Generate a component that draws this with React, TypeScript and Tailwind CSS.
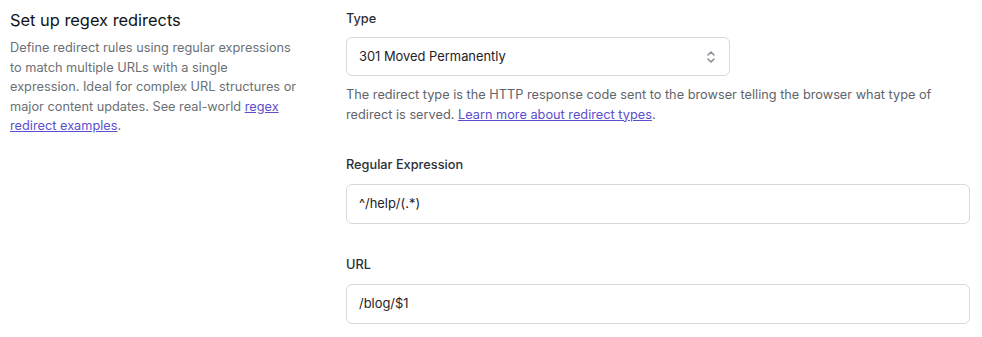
import React from "react";

export default function App() {
  return (
    <div className="w-[982px] h-[337px] bg-white flex" style={{ fontFamily: "Inter, 'Noto Sans', sans-serif" }}>
      <div className="w-[336px] pl-[10px] pt-[8px] pr-[30px]">
        <h2 className="text-[16.4px] leading-[24px] font-normal text-[#111316]">Set up regex redirects</h2>
        <p className="mt-[6px] text-[12.75px] leading-[19.6px] text-[#6b6f76]">
          Define redirect rules using regular expressions<br />
          to match multiple URLs with a single<br />
          expression. Ideal for complex URL structures or<br />
          major content updates. See real-world{" "}
          <a href="#" className="text-[#5a4fcf] underline">regex</a>
          <br />
          <a href="#" className="text-[#5a4fcf] underline">redirect examples</a>.
        </p>
      </div>
      <div className="flex-1 pl-[10px] pr-[12px] pt-[10px] flex flex-col">
        <label className="text-[12.75px] leading-[18px] font-medium text-[#2b2f36]">Type</label>
        <div className="mt-[9px] w-[384px] h-[39px] border border-[#d6d9de] rounded-[6px] flex items-center justify-between pl-[12px] pr-[12px]">
          <span className="text-[12.9px] text-[#1f2328]">301 Moved Permanently</span>
          <svg width="12" height="16" viewBox="0 0 12 16" fill="none" stroke="#8a9099" strokeWidth="1.6" strokeLinecap="round" strokeLinejoin="round">
            <path d="M3 6 L6 3 L9 6" />
            <path d="M3 10 L6 13 L9 10" />
          </svg>
        </div>
        <p className="mt-[9px] text-[12.75px] leading-[19.5px] text-[#5f646b]">
          The redirect type is the HTTP response code sent to the browser telling the browser what type of redirect is served.{" "}
          <a href="#" className="text-[#5a4fcf] underline">Learn more about redirect types</a>.
        </p>
        <label className="mt-[32px] text-[12.75px] leading-[18px] font-medium text-[#2b2f36]">Regular Expression</label>
        <div className="mt-[10px] h-[40px] border border-[#d6d9de] rounded-[6px] flex items-center pl-[12px]">
          <span className="text-[12.9px] text-[#1f2328]">^/help/(.*)</span>
        </div>
        <label className="mt-[32px] text-[12.75px] leading-[18px] font-medium text-[#2b2f36]">URL</label>
        <div className="mt-[10px] h-[40px] border border-[#d6d9de] rounded-[6px] flex items-center pl-[12px]">
          <span className="text-[12.9px] text-[#1f2328]">/blog/$1</span>
        </div>
      </div>
    </div>
  );
}
